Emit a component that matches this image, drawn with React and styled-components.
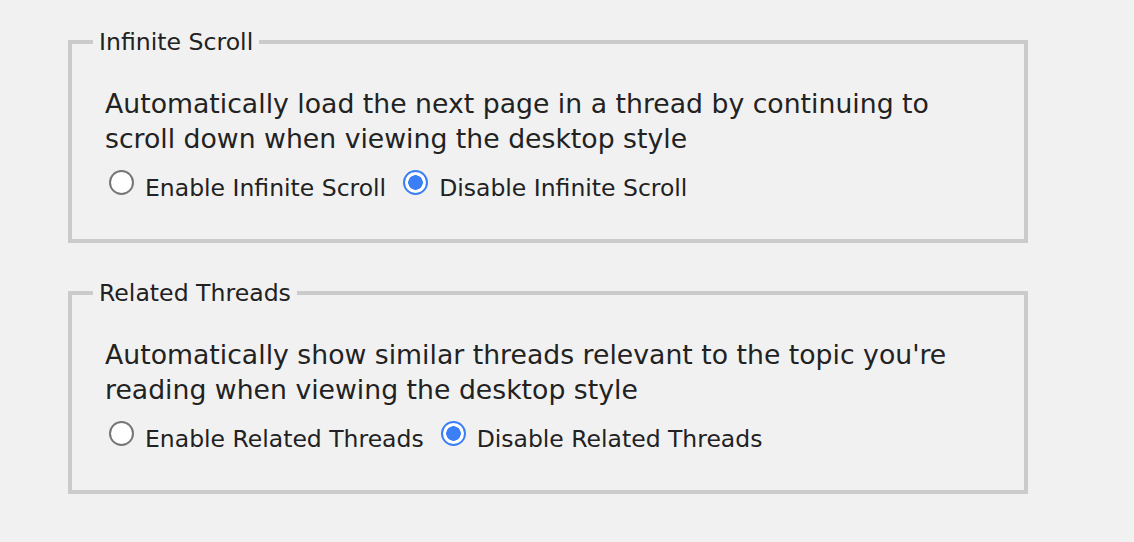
import React, { useState } from 'react';
import styled, { createGlobalStyle } from 'styled-components';

const GlobalStyle = createGlobalStyle`
  html, body {
    margin: 0;
    padding: 0;
    background: #f1f1f1;
  }
  body {
    font-family: 'DejaVu Sans', Verdana, sans-serif;
    color: #222;
  }
`;

const Page = styled.div`
  padding: 28px 0 0 68px;
`;

const Box = styled.fieldset`
  width: 960px;
  box-sizing: border-box;
  margin: 0 0 36px;
  padding: 30px 21px 36px;
  border: 4px solid #cbcbcb;
  min-inline-size: 0;
`;

const Legend = styled.legend`
  font-size: 23.6px;
  line-height: 28px;
  padding: 0 6px;
  margin-left: 0;
`;

const Description = styled.p`
  margin: 0 0 17px 12px;
  max-width: 870px;
  font-size: 26.7px;
  line-height: 35px;
`;

const Options = styled.div`
  display: flex;
  align-items: flex-start;
  margin-left: 12px;
  font-size: 23.5px;
  line-height: 30px;
`;

const Option = styled.label`
  display: inline-flex;
  align-items: flex-start;
  margin-right: 13px;
  cursor: pointer;
`;

const Radio = styled.input.attrs({ type: 'radio' })`
  appearance: none;
  box-sizing: border-box;
  width: 25px;
  height: 25px;
  margin: -3px 11px 0 4px;
  border-radius: 50%;
  border: 2px solid #767676;
  background: #fff;
  flex-shrink: 0;
  cursor: pointer;

  &:checked {
    border: 2.5px solid #3b7ff6;
    background: radial-gradient(circle, #3b7ff6 0 7px, #fff 7.5px);
  }
`;

const settings = [
  {
    key: 'scroll',
    title: 'Infinite Scroll',
    text: 'Automatically load the next page in a thread by continuing to scroll down when viewing the desktop style',
    enable: 'Enable Infinite Scroll',
    disable: 'Disable Infinite Scroll',
  },
  {
    key: 'related',
    title: 'Related Threads',
    text: "Automatically show similar threads relevant to the topic you're reading when viewing the desktop style",
    enable: 'Enable Related Threads',
    disable: 'Disable Related Threads',
  },
];

const Setting = ({ setting }) => {
  const [value, setValue] = useState('off');

  return (
    <Box>
      <Legend>{setting.title}</Legend>
      <Description>{setting.text}</Description>
      <Options>
        <Option>
          <Radio
            name={setting.key}
            checked={value === 'on'}
            onChange={() => setValue('on')}
          />
          {setting.enable}
        </Option>
        <Option>
          <Radio
            name={setting.key}
            checked={value === 'off'}
            onChange={() => setValue('off')}
          />
          {setting.disable}
        </Option>
      </Options>
    </Box>
  );
};

const App = () => (
  <Page>
    <GlobalStyle />
    {settings.map((s) => (
      <Setting key={s.key} setting={s} />
    ))}
  </Page>
);

export default App;
